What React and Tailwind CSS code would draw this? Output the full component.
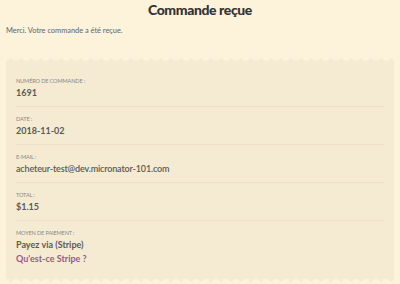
import React from 'react';

const rows = [
  { label: 'Numéro de commande :', value: '1691', bold: true },
  { label: 'Date :', value: '2018-11-02', bold: true },
  { label: 'E-mail :', value: 'acheteur-test@dev.micronator-101.com', bold: false },
  { label: 'Total :', value: '$1.15', bold: true },
];

const Edge = ({ flip }) => (
  <svg width="100%" height="4" className="block" style={flip ? { transform: 'scaleY(-1)' } : undefined}>
    <defs>
      <pattern id={flip ? 'wb' : 'wt'} width="10" height="4" patternUnits="userSpaceOnUse">
        <path d="M0 4 Q2.5 4 4 1.5 Q5 0 6 1.5 Q7.5 4 10 4 Z" fill="#f5ebd3" />
      </pattern>
    </defs>
    <rect width="100%" height="4" fill={`url(#${flip ? 'wb' : 'wt'})`} />
  </svg>
);

const App = () => {
  return (
    <div className="w-[400px] h-[284px] overflow-hidden bg-[#fdf2da] text-[#555]" style={{ fontFamily: 'Lato, "Liberation Sans", sans-serif' }}>
      <h1 className="text-center text-[14px] font-black tracking-[-0.4px] text-[#333] leading-[20px]">Commande reçue</h1>
      <p className="px-[6px] mt-[5px] text-[7.5px] leading-[12px] tracking-[-0.05px] text-[#666]">Merci. Votre commande a été reçue.</p>

      <div className="mx-[6px] mt-[20px]">
        <Edge />
        <div className="bg-[#f5ebd3] px-[10px] pt-[8px]">
          {rows.map((r, i) => (
            <div key={i} className="border-b border-[#ede2c8] h-[38px] pt-[8px]">
              <div className="text-[5.6px] uppercase leading-[8px] tracking-[-0.15px] text-[#888]">{r.label}</div>
              <div className={`text-[9px] leading-[12px] mt-[2px] text-[#5a5a5a] ${r.bold ? 'font-bold' : 'font-semibold tracking-[-0.15px]'}`}>{r.value}</div>
            </div>
          ))}
          <div className="pt-[8px] pb-[14px]">
            <div className="text-[5.6px] uppercase leading-[8px] tracking-[-0.15px] text-[#888]">Moyen de paiement :</div>
            <div className="text-[9px] leading-[12px] mt-[2px] font-bold text-[#5a5a5a]">Payez via (Stripe)</div>
            <div className="text-[9px] leading-[12px] mt-[2px] font-bold text-[#96588a]">Qu'est-ce Stripe ?</div>
          </div>
        </div>
        <Edge flip />
      </div>
    </div>
  );
};

export default App;
